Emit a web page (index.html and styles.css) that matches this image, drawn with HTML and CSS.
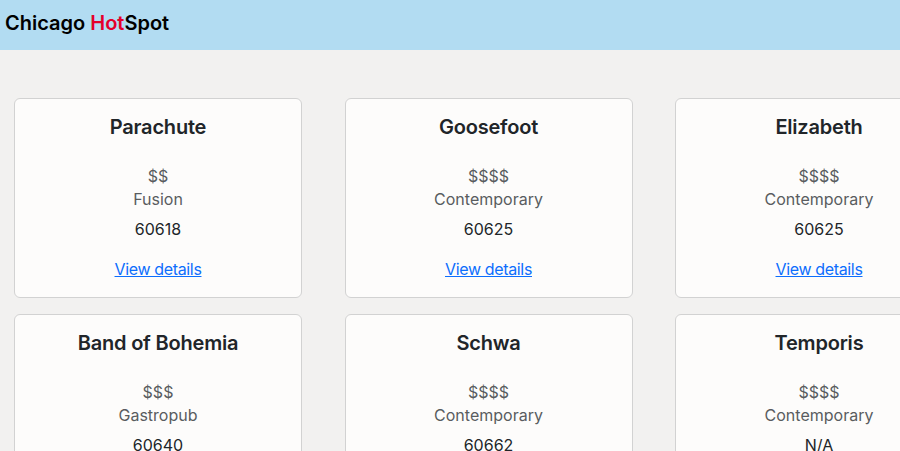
FILE: index.html
```html
<!DOCTYPE html>
<html>
<head>
<meta charset="utf-8">
<link rel="stylesheet" href="styles.css">
</head>
<body>
<header class="topbar">
  <h1 class="brand">Chicago <span class="hot">Hot</span>Spot</h1>
</header>
<main class="grid">
  <div class="card">
    <h2 class="name">Parachute</h2>
    <p class="price">$$</p>
    <p class="cuisine">Fusion</p>
    <p class="zip">60618</p>
    <a class="link" href="#">View details</a>
  </div>
  <div class="card">
    <h2 class="name">Goosefoot</h2>
    <p class="price">$$$$</p>
    <p class="cuisine">Contemporary</p>
    <p class="zip">60625</p>
    <a class="link" href="#">View details</a>
  </div>
  <div class="card">
    <h2 class="name">Elizabeth</h2>
    <p class="price">$$$$</p>
    <p class="cuisine">Contemporary</p>
    <p class="zip">60625</p>
    <a class="link" href="#">View details</a>
  </div>
  <div class="card">
    <h2 class="name">Band of Bohemia</h2>
    <p class="price">$$$</p>
    <p class="cuisine">Gastropub</p>
    <p class="zip">60640</p>
    <a class="link" href="#">View details</a>
  </div>
  <div class="card">
    <h2 class="name">Schwa</h2>
    <p class="price">$$$$</p>
    <p class="cuisine">Contemporary</p>
    <p class="zip">60662</p>
    <a class="link" href="#">View details</a>
  </div>
  <div class="card">
    <h2 class="name">Temporis</h2>
    <p class="price">$$$$</p>
    <p class="cuisine">Contemporary</p>
    <p class="zip">N/A</p>
    <a class="link" href="#">View details</a>
  </div>
</main>
</body>
</html>
```
FILE: styles.css
```css
html, body {
  margin: 0;
  padding: 0;
}
body {
  background: #f2f1f0;
  font-family: Inter, "Noto Sans", sans-serif;
  color: #212529;
  overflow: hidden;
  width: 900px;
  height: 451px;
}
.topbar {
  height: 50px;
  background: #b2dcf2;
  display: flex;
  align-items: flex-start;
  padding: 0 5px;
  box-sizing: border-box;
}
.brand {
  margin: 11px 0 0;
  font-size: 20px;
  line-height: 24px;
  font-weight: 600;
  color: #000;
  letter-spacing: 0;
}
.hot {
  color: #e4002b;
}
.grid {
  display: grid;
  grid-template-columns: repeat(3, 288px);
  column-gap: 42.5px;
  row-gap: 16px;
  padding: 48px 0 0 14px;
}
.card {
  background: #fdfcfb;
  border: 1px solid #d2d2d2;
  border-radius: 6px;
  padding: 16px;
  display: flex;
  flex-direction: column;
  align-items: center;
  text-align: center;
}
.name {
  margin: 0;
  font-size: 20px;
  line-height: 24px;
  font-weight: 600;
  color: #212529;
  letter-spacing: -0.2px;
}
.price {
  margin: 25px 0 0;
  font-size: 16px;
  line-height: 24px;
  color: #595c5f;
}
.cuisine {
  margin: -1px 0 0;
  font-size: 16px;
  line-height: 24px;
  color: #595c5f;
}
.zip {
  margin: 6px 0 0;
  font-size: 16px;
  line-height: 24px;
  color: #212529;
}
.link {
  margin-top: 16px;
  font-size: 16px;
  line-height: 24px;
  color: #0d6efd;
  text-decoration: underline;
  letter-spacing: -0.35px;
}
```
